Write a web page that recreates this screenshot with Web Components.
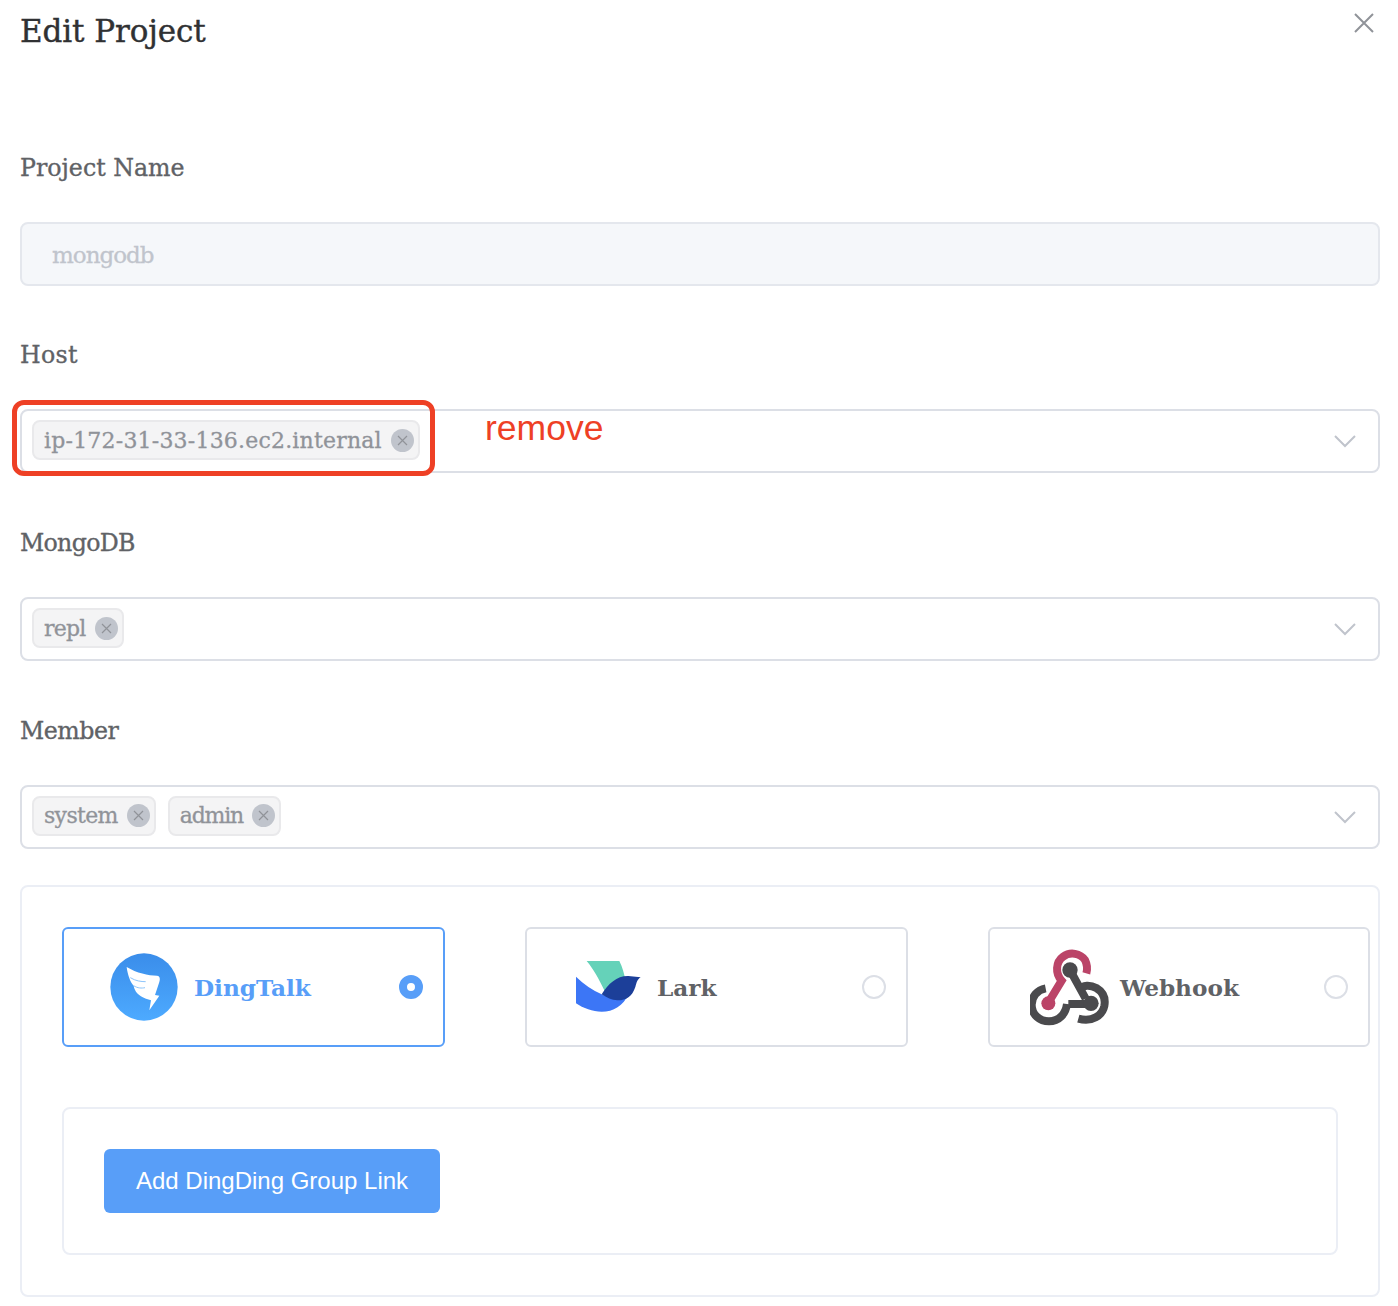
<!DOCTYPE html>
<html>
<head>
<meta charset="utf-8">
<title>Edit Project</title>
<style>
    html, body { margin: 0; padding: 0; background: #fff; }
    body { font-family: "DejaVu Serif", serif; }
</style>
</head>
<body>
<edit-project>
    <form-item label="Project Name"><text-input value="mongodb" disabled></text-input></form-item>
    <form-item label="Host" style="letter-spacing:.3px"><tag-select><select-tag style="letter-spacing:.2px">ip-172-31-33-136.ec2.internal</select-tag></tag-select></form-item>
    <form-item label="MongoDB" style="letter-spacing:-.7px"><tag-select><select-tag style="letter-spacing:-.75px">repl</select-tag></tag-select></form-item>
    <form-item label="Member" style="letter-spacing:-.5px"><tag-select><select-tag style="letter-spacing:-.67px">system</select-tag><select-tag style="letter-spacing:-1.2px">admin</select-tag></tag-select></form-item>
    <notify-panel>
        <channel-card name="DingTalk" active>
            <svg slot="icon" width="68" height="68" viewBox="45 24 204 204">
                <defs>
                    <linearGradient id="ding" x1="0" y1="0" x2="0" y2="1">
                        <stop offset="0" stop-color="#3a8dea"/>
                        <stop offset="1" stop-color="#4daaff"/>
                    </linearGradient>
                </defs>
                <circle cx="147" cy="126" r="101" fill="url(#ding)"/>
                <path fill="#fff" d="M95 66C125 84 160 92 186 92C196 93 196 104 192 114L180 150L193 152L163 196L168 166L153 161C130 152 118 138 116 122C106 112 98 90 95 66Z"/>
                <path fill="none" stroke="#8cc4fb" stroke-width="3" d="M106 98C122 108 138 110 152 110M116 122C128 130 140 130 150 128"/>
            </svg>
        </channel-card>
        <channel-card name="Lark">
            <svg slot="icon" width="68" height="68" viewBox="39 24 204 204">
                <path fill="#65d2b9" d="M80 48H178C188 68 192 85 196 104C170 110 150 122 135 140C118 104 100 72 80 48Z"/>
                <path fill="#3c76f6" d="M48 95C72 118 98 136 125 148C150 160 178 166 206 146C190 182 160 200 125 200C98 200 70 190 48 175Z"/>
                <path fill="#1c3f99" d="M125 148C145 115 172 92 205 93L242 97C232 103 230 112 226 126C216 156 196 167 172 166C155 165 140 158 125 148Z"/>
            </svg>
        </channel-card>
        <channel-card name="Webhook" style="width:382px">
            <svg slot="icon" width="80" height="80" viewBox="45 21 240 240">
                <g fill="none" stroke-width="24">
                    <path stroke="#4a4a4d" d="M165 90L212 176M160 192H228"/>
                    <path stroke="#4a4a4d" d="M92 145C66 150 50 170 50 194C50 224 74 244 102 244C132 244 152 222 156 192"/>
                    <path stroke="#4a4a4d" d="M192 148C204 134 226 134 244 144C264 156 272 176 268 198C262 226 232 248 190 236"/>
                    <path stroke="#bb4468" d="M100 188L140 122C120 100 122 66 144 50C166 34 196 40 210 60C216 72 218 86 214 100"/>
                </g>
                <circle cx="165" cy="90" r="23" fill="#4a4a4d"/>
                <circle cx="228" cy="190" r="23" fill="#4a4a4d"/>
                <circle cx="100" cy="190" r="21" fill="#bb4468"/>
            </svg>
        </channel-card>
        <primary-button slot="footer">Add DingDing Group Link</primary-button>
    </notify-panel>
    <remove-note>remove</remove-note>
</edit-project>

<script>
class EditProject extends HTMLElement {
    constructor() {
        super();
        this.attachShadow({ mode: 'open' });
    }

    connectedCallback() {
        this.shadowRoot.innerHTML = `
            <style>
                :host {
                    display: block;
                    position: relative;
                    box-sizing: border-box;
                    width: 1398px;
                    height: 1306px;
                    padding: 0 18px 0 20px;
                    font-family: "DejaVu Serif", serif;
                    overflow: hidden;
                }
                header {
                    display: flex;
                    justify-content: space-between;
                    align-items: flex-start;
                    height: 149.7px;
                }
                h1 {
                    margin: 9px 0 0;
                    font-size: 31px;
                    line-height: 44px;
                    font-weight: 400;
                    letter-spacing: -.1px;
                    color: #303133;
                    -webkit-text-stroke: .4px #303133;
                }
                svg { display: block; margin: 13px 6px 0 0; }
            </style>
            <header>
                <h1>Edit Project</h1>
                <svg width="20" height="20" viewBox="0 0 20 20" fill="none" stroke="#909399" stroke-width="2">
                    <path d="M1 1L19 19M19 1L1 19"/>
                </svg>
            </header>
            <slot></slot>
        `;
    }
}

class FormItem extends HTMLElement {
    constructor() {
        super();
        this.attachShadow({ mode: 'open' });
    }

    connectedCallback() {
        this.shadowRoot.innerHTML = `
            <style>
                :host { display: block; margin-bottom: 51.67px; }
                label {
                    display: block;
                    height: 36px;
                    line-height: 36px;
                    margin-bottom: 36px;
                    font-size: 23.7px;
                    color: #606266;
                    -webkit-text-stroke: .35px #606266;
                }
            </style>
            <label>${this.getAttribute('label')}</label>
            <slot></slot>
        `;
    }
}

class TextInput extends HTMLElement {
    constructor() {
        super();
        this.attachShadow({ mode: 'open' });
    }

    connectedCallback() {
        this.shadowRoot.innerHTML = `
            <style>
                :host {
                    display: flex;
                    align-items: center;
                    box-sizing: border-box;
                    height: 64px;
                    padding: 2px 30px 0;
                    background: #f5f7fa;
                    border: 2px solid #e4e7ed;
                    border-radius: 8px;
                    font-size: 23px;
                    letter-spacing: -1px;
                    color: #c0c4cc;
                    -webkit-text-stroke: .3px #c0c4cc;
                }
            </style>
            ${this.getAttribute('value')}
        `;
    }
}

class TagSelect extends HTMLElement {
    constructor() {
        super();
        this.attachShadow({ mode: 'open' });
    }

    connectedCallback() {
        this.shadowRoot.innerHTML = `
            <style>
                :host {
                    display: flex;
                    align-items: center;
                    justify-content: space-between;
                    box-sizing: border-box;
                    height: 64px;
                    padding: 0 22px 0 10px;
                    background: #fff;
                    border: 2px solid #dcdfe6;
                    border-radius: 8px;
                }
                .tags { display: flex; gap: 12px; margin-bottom: 2px; }
                svg { display: block; }
            </style>
            <div class="tags"><slot></slot></div>
            <svg width="22" height="14" viewBox="0 0 22 14" fill="none" stroke="#c0c4cc" stroke-width="2">
                <path d="M1 2L11 12L21 2"/>
            </svg>
        `;
    }
}

class SelectTag extends HTMLElement {
    constructor() {
        super();
        this.attachShadow({ mode: 'open' });
    }

    connectedCallback() {
        this.shadowRoot.innerHTML = `
            <style>
                :host {
                    display: flex;
                    align-items: center;
                    gap: 9px;
                    box-sizing: border-box;
                    height: 40px;
                    padding: 0 4px 0 10px;
                    background: #f4f4f5;
                    border: 2px solid #e9e9eb;
                    border-radius: 8px;
                    font-size: 22px;
                    color: #909399;
                    -webkit-text-stroke: .3px #909399;
                }
                .close {
                    display: flex;
                    align-items: center;
                    justify-content: center;
                    width: 23px;
                    height: 23px;
                    border-radius: 50%;
                    background: #c0c4cc;
                }
            </style>
            <slot></slot>
            <span class="close">
                <svg width="11" height="11" viewBox="0 0 11 11" fill="none" stroke="#909399" stroke-width="1.2">
                    <path d="M1 1L10 10M10 1L1 10"/>
                </svg>
            </span>
        `;
    }
}

class NotifyPanel extends HTMLElement {
    constructor() {
        super();
        this.attachShadow({ mode: 'open' });
    }

    connectedCallback() {
        this.shadowRoot.innerHTML = `
            <style>
                :host {
                    display: block;
                    box-sizing: border-box;
                    margin-top: -15.37px;
                    height: 412px;
                    padding: 40px 0 40px 40px;
                    border: 2px solid #ebeef5;
                    border-radius: 8px;
                }
                .cards {
                    display: flex;
                    gap: 80px;
                }
                .box {
                    box-sizing: border-box;
                    height: 148px;
                    margin: 60px 40px 0 0;
                    padding: 40px;
                    border: 2px solid #ebeef5;
                    border-radius: 8px;
                }
            </style>
            <div class="cards"><slot></slot></div>
            <div class="box"><slot name="footer"></slot></div>
        `;
    }
}

class ChannelCard extends HTMLElement {
    constructor() {
        super();
        this.attachShadow({ mode: 'open' });
    }

    connectedCallback() {
        const active = this.hasAttribute('active');
        this.shadowRoot.innerHTML = `
            <style>
                :host {
                    display: flex;
                    align-items: center;
                    flex: none;
                    box-sizing: border-box;
                    width: 383px;
                    height: 120px;
                    padding: 0 20px 0 46px;
                    border: 2px solid ${active ? '#589ef8' : '#dcdfe6'};
                    border-radius: 6px;
                    background: #fff;
                }
                .icon {
                    display: flex;
                    justify-content: center;
                    flex: none;
                    width: 68px;
                }
                ::slotted(svg) { display: block; flex: none; }
                .name {
                    flex: 1;
                    margin-left: 16px;
                    padding-top: 2px;
                    font-size: 23.2px;
                    font-weight: 700;
                    color: ${active ? '#589ef8' : '#606266'};
                }
                .radio {
                    box-sizing: border-box;
                    flex: none;
                    width: 24px;
                    height: 24px;
                    border-radius: 50%;
                    border: ${active ? '8px solid #589ef8' : '2px solid #dcdfe6'};
                    background: #fff;
                }
            </style>
            <div class="icon"><slot name="icon"></slot></div>
            <span class="name">${this.getAttribute('name')}</span>
            <span class="radio"></span>
        `;
    }
}

class PrimaryButton extends HTMLElement {
    constructor() {
        super();
        this.attachShadow({ mode: 'open' });
    }

    connectedCallback() {
        this.shadowRoot.innerHTML = `
            <style>
                :host {
                    display: inline-flex;
                    align-items: center;
                    justify-content: center;
                    box-sizing: border-box;
                    width: 336px;
                    height: 64px;
                    background: #589ef8;
                    border-radius: 6px;
                    font-family: "Liberation Sans", Arial, sans-serif;
                    font-size: 24px;
                    color: #fff;
                }
            </style>
            <slot></slot>
        `;
    }
}

// the red mark drawn over the screenshot, sits on top of the Host field
class RemoveNote extends HTMLElement {
    constructor() {
        super();
        this.attachShadow({ mode: 'open' });
    }

    connectedCallback() {
        this.shadowRoot.innerHTML = `
            <style>
                :host { display: block; }
                .frame {
                    position: absolute;
                    left: 12px;
                    top: 400px;
                    box-sizing: border-box;
                    width: 423px;
                    height: 76px;
                    border: 5px solid #ee4025;
                    border-radius: 12px;
                }
                .text {
                    position: absolute;
                    left: 485px;
                    top: 407px;
                    line-height: 42px;
                    font-family: "Liberation Sans", Arial, sans-serif;
                    font-size: 35.5px;
                    color: #ee4025;
                }
            </style>
            <div class="frame"></div>
            <div class="text"><slot></slot></div>
        `;
    }
}

customElements.define('edit-project', EditProject);
customElements.define('form-item', FormItem);
customElements.define('text-input', TextInput);
customElements.define('tag-select', TagSelect);
customElements.define('select-tag', SelectTag);
customElements.define('notify-panel', NotifyPanel);
customElements.define('channel-card', ChannelCard);
customElements.define('primary-button', PrimaryButton);
customElements.define('remove-note', RemoveNote);
</script>
</body>
</html>
